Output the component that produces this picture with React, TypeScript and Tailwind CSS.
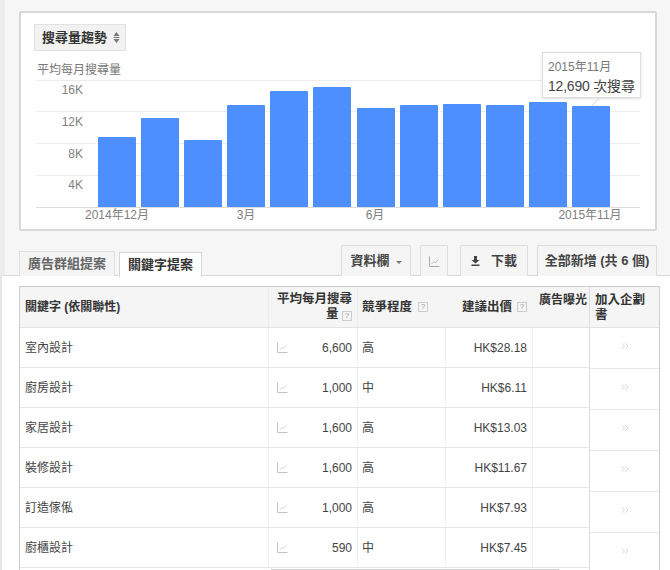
import React from 'react'
import { ChevronsRight } from 'lucide-react'

const font = { fontFamily: '"Liberation Sans", "Noto Sans CJK TC", sans-serif' }

const bars = [
  { x: 62, top: 137 },
  { x: 105, top: 118 },
  { x: 148, top: 140 },
  { x: 191, top: 105 },
  { x: 234, top: 91 },
  { x: 277, top: 87 },
  { x: 321, top: 108 },
  { x: 364, top: 105 },
  { x: 407, top: 104 },
  { x: 450, top: 105 },
  { x: 493, top: 102 },
  { x: 536, top: 106 },
]

const rows = [
  { name: '室內設計', volume: '6,600', level: '高', bid: 'HK$28.18' },
  { name: '廚房設計', volume: '1,000', level: '中', bid: 'HK$6.11' },
  { name: '家居設計', volume: '1,600', level: '高', bid: 'HK$13.03' },
  { name: '裝修設計', volume: '1,600', level: '高', bid: 'HK$11.67' },
  { name: '訂造傢俬', volume: '1,000', level: '高', bid: 'HK$7.93' },
  { name: '廚櫃設計', volume: '590', level: '中', bid: 'HK$7.45' },
]

function TrendIcon({ className }: { className?: string }) {
  return (
    <svg viewBox="0 0 11 11" className={className} fill="none" stroke="currentColor" strokeWidth="1">
      <path d="M0.5 0.5V10.5H10.5" />
      <path d="M2.5 8L5 5.5L6.5 7L9.5 3.5" strokeWidth="0.8" />
    </svg>
  )
}

function HelpBox() {
  return (
    <span className="inline-flex h-[10px] w-[10px] items-center justify-center border border-[#ccc] text-[8px] font-normal leading-none text-[#999]">
      ?
    </span>
  )
}

function TrendChart() {
  return (
    <svg width="620" height="150" className="ml-[2px] block">
      {[2, 33, 65, 97, 129].map((y) => (
        <line key={y} x1="0" x2="604" y1={y + 0.5} y2={y + 0.5} stroke={y === 129 ? '#dcdcdc' : '#ececec'} />
      ))}
      {bars.map((bar) => (
        <path
          key={bar.x}
          d={`M${bar.x} 129V${bar.top - 78 + 1}q0 -1 1 -1H${bar.x + 37}q1 0 1 1V129Z`}
          fill="#4d8fff"
        />
      ))}
      <g fontSize="12" fill="#808080" textAnchor="end">
        <text x="47" y="16">16K</text>
        <text x="47" y="48">12K</text>
        <text x="47" y="80">8K</text>
        <text x="47" y="111">4K</text>
      </g>
      <g fontSize="12" fill="#808080" textAnchor="middle">
        <text x="81" y="141">2014年12月</text>
        <text x="210" y="141">3月</text>
        <text x="339" y="141">6月</text>
        <text x="554" y="141">2015年11月</text>
      </g>
    </svg>
  )
}

function ToolbarButton({ className, children }: { className: string; children: React.ReactNode }) {
  return (
    <div
      className={`flex h-[31px] items-center justify-center rounded-t-[2px] border border-b-0 border-[#dcdcdc] bg-[#f5f5f5] text-[13px] font-bold text-[#444] ${className}`}
    >
      {children}
    </div>
  )
}

export default function App() {
  return (
    <div style={font} className="h-[570px] w-[670px] overflow-hidden bg-white text-[12px] text-[#333]">
      <div className="h-[276px] border-b border-l-[5px] border-[#d9d9d9] border-l-[#ececec] bg-[#f6f6f6]">
        <div className="ml-[14px] pt-[11px]">
          <div className="relative h-[220px] w-[638px] rounded-[2px] border-2 border-[#d8d8d8] bg-white pl-[13px] pt-[11px]">
            <div className="flex h-[27px] w-[92px] items-center gap-[6px] border border-[#e2e2e2] bg-[#f2f2f2] pl-[7px] text-[13px] font-bold text-[#333]">
              搜尋量趨勢
              <svg viewBox="0 0 7 11" className="h-[11px] w-[7px]" fill="#777">
                <path d="M3.5 0L6.5 4H0.5ZM3.5 11L0.5 7H6.5ZM0.5 5H6.5V6H0.5Z" />
              </svg>
            </div>
            <div className="mt-[11px] pl-[3px] text-[12px] leading-[16px] text-[#777]">平均每月搜尋量</div>
            <TrendChart />
            {/* tooltip lies over the chart */}
            <div className="absolute left-[521px] top-[39px] h-[46px] w-[99px] border border-[#dedede] bg-white pl-[5px] pt-[6px] shadow-sm">
              <div className="text-[12px] leading-[16px] text-[#777]">2015年11月</div>
              <div className="mt-[3px] whitespace-nowrap text-[14px] leading-[16px] tracking-[-0.2px] text-[#444]">12,690 次搜尋</div>
              <div className="absolute left-[52px] top-[44px] h-[10px] w-[1px] rotate-45 bg-[#dedede]" />
            </div>
          </div>
        </div>

        <div className="mt-[14px] flex h-[31px] items-end pl-[14px] pr-[13px]">
          <div className="flex h-[25px] w-[96px] items-center justify-center border border-b-0 border-[#dedede] bg-[#f4f4f4] text-[13px] font-bold text-[#666]">
            廣告群組提案
          </div>
          <div className="relative top-[1px] ml-[4px] flex h-[25px] w-[83px] items-center justify-center border border-b-0 border-[#d8d8d8] bg-white text-[13px] font-bold text-[#333]">
            關鍵字提案
          </div>
          <div className="ml-auto flex items-end">
            <ToolbarButton className="w-[70px] gap-[6px]">
              資料欄
              <span className="mt-[2px] border-x-[3px] border-t-[3px] border-x-transparent border-t-[#777]" />
            </ToolbarButton>
            <ToolbarButton className="ml-[9px] w-[28px]">
              <TrendIcon className="h-[11px] w-[11px] text-[#aaa]" />
            </ToolbarButton>
            <ToolbarButton className="ml-[12px] w-[68px] gap-[11px]">
              <svg viewBox="0 0 9 10" className="h-[10px] w-[9px]" fill="#444">
                <path d="M3 0H6V4H8.5L4.5 7.5L0.5 4H3ZM0.5 8.5H8.5V10H0.5Z" />
              </svg>
              下載
            </ToolbarButton>
            <ToolbarButton className="ml-[9px] w-[120px]">全部新增 (共 6 個)</ToolbarButton>
          </div>
        </div>
      </div>

      <div className="h-[294px] border-l-2 border-[#e6e6e6] pl-[17px] pt-[10px]">
        <div className="flex w-[641px] border-x border-t border-[#ccc]">
          <div className="w-[569px] shrink-0">
            <div className="grid h-[41px] grid-cols-[248px_89px_88px_87px_57px] border-b border-[#e2e2e2] bg-[#f5f5f5] text-[12.5px] font-bold leading-[15px] text-[#333]">
              <div className="flex items-center pl-[5px] text-[12px]">關鍵字 (依關聯性)</div>
              <div className="flex items-center justify-end border-l border-[#ececec] pr-[5px] text-right">
                <div>
                  平均每月搜尋
                  <br />
                  量 <HelpBox />
                </div>
              </div>
              <div className="flex items-center gap-[6px] border-l border-[#ececec] pl-[4px]">
                <span className="whitespace-nowrap">競爭程度</span>
                <HelpBox />
              </div>
              <div className="flex items-center justify-end gap-[5px] pr-[5px]">
                <span className="whitespace-nowrap">建議出價</span>
                <HelpBox />
              </div>
              <div className="whitespace-nowrap pl-[7px] pt-[6px] text-[12px]">廣告曝光</div>
            </div>
            {rows.map((row) => (
              <div
                key={row.name}
                className="grid h-[40px] grid-cols-[248px_89px_88px_87px_57px] items-stretch border-b border-[#e6e6e6] text-[12px] text-[#444]"
              >
                <div className="flex items-center pl-[5px]">{row.name}</div>
                <div className="flex items-center justify-between border-l border-[#f2f2f2] pl-[8px] pr-[5px]">
                  <TrendIcon className="h-[11px] w-[11px] text-[#c4c4c4]" />
                  {row.volume}
                </div>
                <div className="flex items-center border-l border-[#f2f2f2] pl-[4px]">{row.level}</div>
                <div className="flex items-center justify-end border-l border-[#f2f2f2] pr-[5px]">{row.bid}</div>
                <div className="border-l border-[#f2f2f2]" />
              </div>
            ))}
            {/* horizontal scrollbar just under the table */}
            <div className="ml-[251px] mt-[1px] h-[2px] w-[288px] bg-[#cfcfcf]" />
          </div>
          <div className="w-[70px] shrink-0 border-l border-[#dcdcdc]">
            <div className="h-[41px] border-b border-[#e2e2e2] bg-[#f5f5f5] pl-[5px] pt-[6px] text-[12.5px] font-bold leading-[15px] text-[#333]">
              加入企劃
              <br />
              書
            </div>
            {rows.map((row) => (
              <div key={row.name} className="flex h-[41px] items-center justify-center border-b border-[#e6e6e6]">
                <ChevronsRight strokeWidth={1.5} className="mb-[4px] h-[12px] w-[12px] text-[#c8c8c8]" />
              </div>
            ))}
          </div>
        </div>
      </div>
    </div>
  )
}
